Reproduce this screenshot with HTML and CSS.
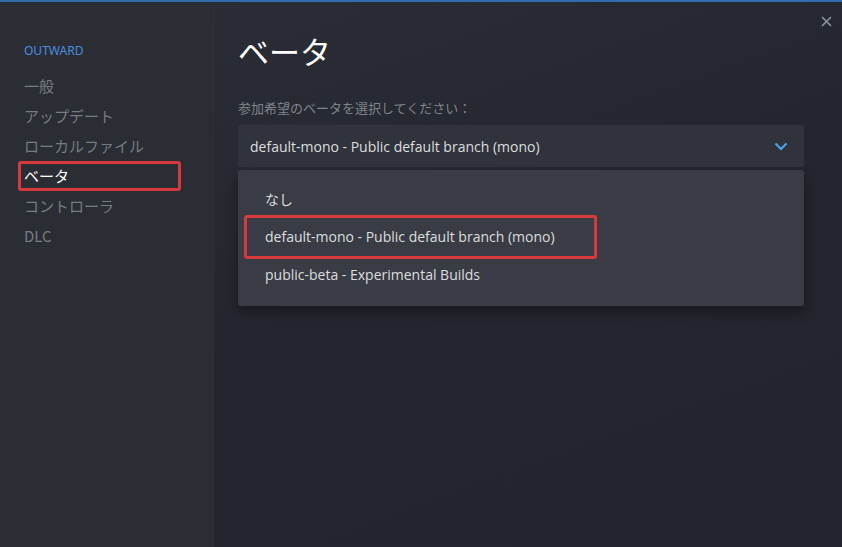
FILE: index.html
```html
<!DOCTYPE html>
<html lang="ja">
<head>
	<meta charset="UTF-8">
	<title>プロパティ - ベータ</title>
	<link rel="stylesheet" href="styles.css">
</head>
<body>
	<div class="dialog">
		<!--사이드 메뉴-->
		<nav class="side">
			<h2 class="game">OUTWARD</h2>
			<ul>
				<li>一般</li>
				<li>アップデート</li>
				<li>ローカルファイル</li>
				<li class="on">ベータ</li>
				<li>コントローラ</li>
				<li>DLC</li>
			</ul>
		</nav>

		<!--본문-->
		<section class="main">
			<h1 class="tit">ベータ</h1>
			<p class="label">参加希望のベータを選択してください：</p>
			<div class="select">
				<span>default-mono - Public default branch (mono)</span>
				<svg class="chev" width="14" height="9" viewBox="0 0 14 9"><path d="M1.5 1.5 L7 7 L12.5 1.5" fill="none" stroke="#4aa3e8" stroke-width="2.2"/></svg>
			</div>
			<ul class="opts">
				<li>なし</li>
				<li class="mark">default-mono - Public default branch (mono)</li>
				<li>public-beta - Experimental Builds</li>
			</ul>
		</section>

		<!--닫기-->
		<span class="close">
			<svg width="11" height="11" viewBox="0 0 11 11"><path d="M1 1 L10 10 M10 1 L1 10" stroke="#8e939a" stroke-width="1.6"/></svg>
		</span>
	</div>
</body>
</html>
```

FILE: styles.css
```css
html,body,ul,h1,h2,p{
	margin: 0;
	padding: 0;
}
ul{
	list-style: none;
}
body{
	background-color: #23262e;
	font-family: "Noto Sans CJK JP", "Noto Sans", sans-serif;
}

/* 전체 창 */
.dialog{
	position: relative;
	display: flex;
	width: 842px;
	height: 547px;
	border-top: 2px solid #2e6db0;
	box-sizing: border-box;
}

/* 사이드 */
.side{
	width: 214px;
	flex: none;
	background-color: #2a2d33;
	padding: 41px 0 0 18px;
	box-sizing: border-box;
	border-right: 1px solid #2e3138;
}
.game{
	padding-left: 6px;
	font-family: "Noto Sans", sans-serif;
	font-size: 12px;
	font-weight: normal;
	line-height: 16px;
	color: #4a8ee0;
	margin-bottom: 12px;
}
.side li{
	width: 163px;
	height: 30px;
	padding-left: 6px;
	box-sizing: border-box;
	font-size: 15px;
	line-height: 30px;
	color: #777c84;
}
.side li.on{
	color: #fff;
	border: 3px solid #d9393d;
	border-radius: 3px;
	padding-left: 3px;
	line-height: 24px;
}

/* 본문 */
.main{
	flex: 1;
	padding: 26px 38px 0 24px;
	background: linear-gradient(160deg, #2a2d35 0%, #23262e 45%, #22252d 100%);
}
.tit{
	font-size: 31px;
	font-weight: normal;
	color: #fff;
	line-height: 46px;
}
.label{
	margin-top: 25px;
	font-size: 13px;
	line-height: 18px;
	color: #7f848c;
}
.select{
	display: flex;
	align-items: center;
	justify-content: space-between;
	margin-top: 8px;
	height: 42px;
	padding: 0 16px 0 12px;
	background-color: #30333b;
	border-radius: 2px;
	font-family: "Open Sans", "Noto Sans", sans-serif;
	font-size: 14px;
	color: #dcdedf;
}
.opts{
	margin-top: 3px;
	padding: 10px 0 12px;
	background-color: #393c44;
	border-radius: 3px;
	box-shadow: 0 6px 12px rgba(0,0,0,.35);
	font-family: "Open Sans", "Noto Sans", sans-serif;
	font-size: 14px;
	color: #dcdedf;
}
.opts li{
	height: 38px;
	line-height: 38px;
	padding-left: 27px;
}
.opts li:first-child{
	font-family: "Noto Sans CJK JP", sans-serif;
}
.opts li.mark{
	width: 353px;
	height: 44px;
	line-height: 38px;
	margin: -3px 0 -3px 6px;
	padding-left: 18px;
	box-sizing: border-box;
	border: 3px solid #d9393d;
	border-radius: 3px;
}

/* 닫기 */
.close{
	position: absolute;
	top: 6px;
	right: 10px;
}
```
